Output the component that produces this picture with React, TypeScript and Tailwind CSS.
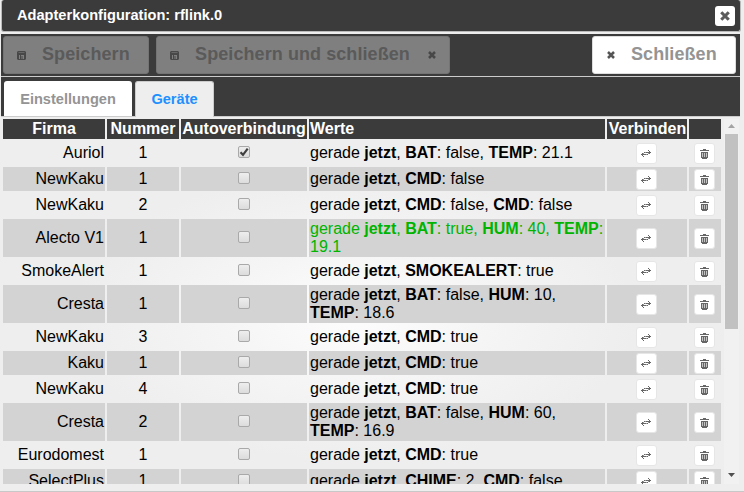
import React from 'react';

type Reading = [string, string];
type Device = { name: string; num: number; readings: Reading[]; auto?: boolean; fresh?: boolean; tall?: boolean };

const devices: Device[] = [
  { name: 'Auriol', num: 1, auto: true, readings: [['BAT', 'false'], ['TEMP', '21.1']] },
  { name: 'NewKaku', num: 1, readings: [['CMD', 'false']] },
  { name: 'NewKaku', num: 2, readings: [['CMD', 'false'], ['CMD', 'false']] },
  { name: 'Alecto V1', num: 1, fresh: true, tall: true, readings: [['BAT', 'true'], ['HUM', '40'], ['TEMP', '19.1']] },
  { name: 'SmokeAlert', num: 1, readings: [['SMOKEALERT', 'true']] },
  { name: 'Cresta', num: 1, tall: true, readings: [['BAT', 'false'], ['HUM', '10'], ['TEMP', '18.6']] },
  { name: 'NewKaku', num: 3, readings: [['CMD', 'true']] },
  { name: 'Kaku', num: 1, readings: [['CMD', 'true']] },
  { name: 'NewKaku', num: 4, readings: [['CMD', 'true']] },
  { name: 'Cresta', num: 2, tall: true, readings: [['BAT', 'false'], ['HUM', '60'], ['TEMP', '16.9']] },
  { name: 'Eurodomest', num: 1, readings: [['CMD', 'true']] },
  { name: 'SelectPlus', num: 1, readings: [['CHIME', '2'], ['CMD', 'false']] },
];

const columns = 'grid grid-cols-[102px_72px_126px_296px_80px_32px] gap-x-[2px]';

function CrossIcon({ className, size = 8 }: { className: string; size?: number }) {
  return (
    <svg width={size} height={size} viewBox="0 0 8 8" className={`block shrink-0 ${className}`}>
      <path d="M1 1 7 7M7 1 1 7" stroke="currentColor" strokeWidth="2.5" fill="none" />
    </svg>
  );
}

function DiskIcon() {
  return (
    <svg width="9" height="9" viewBox="0 0 9 9" className="block shrink-0 text-[#484848]">
      <path
        fillRule="evenodd"
        fill="currentColor"
        d="M1 0H8L9 1V8L8 9H1L0 8V1ZM2 4V8H3V4ZM4 5V8H7V4H4Z"
      />
      <path d="M1.5 1.5H7.5" stroke="#666" strokeWidth="1" />
      <path d="M5 5V8" stroke="currentColor" strokeWidth="1" />
    </svg>
  );
}

function SwapIcon() {
  return (
    <svg width="11" height="7" viewBox="0 0 11 7" shapeRendering="crispEdges" className="block shrink-0 text-[#666]">
      <path
        fill="currentColor"
        d="M7 0h1v1h-1zM8 1h1v1h-1zM3 2h1v1h-1zM5 2h5v1h-5zM8 3h1v1h-1zM1 3h1v1h-1zM0 4h5v1h-5zM6 4h1v1h-1zM1 5h1v1h-1zM2 6h1v1h-1z"
      />
      <path fill="#a0a0a0" d="M4 2h1v1h-1zM5 4h1v1h-1zM7 3h1v1h-1zM2 3h1v1h-1z" />
    </svg>
  );
}

function TrashIcon() {
  return (
    <svg width="9" height="10" viewBox="0 0 9 10" shapeRendering="crispEdges" className="mt-px block shrink-0 text-[#666]">
      <path fill="currentColor" d="M3 0H6V1H9V2H0V1H3ZM1 3H8V9H7V10H2V9H1Z" />
      <path fill="#c4c4c4" d="M2 4H3V8H2ZM4 4H5V8H4ZM6 4H7V8H6Z" />
    </svg>
  );
}

function IconButton({ children }: { children: React.ReactNode }) {
  return (
    <button className="mt-px flex size-[21px] items-center justify-center rounded-[3px] border border-[#e6e6e6] bg-white">
      {children}
    </button>
  );
}

function Checkbox({ checked }: { checked?: boolean }) {
  return (
    <span className="mb-[2px] flex size-[12px] items-center justify-center rounded-[2px] border border-[#a9a9a9] bg-gradient-to-b from-[#eee] to-[#dcdcdc]">
      {checked && (
        <svg width="10" height="10" viewBox="0 0 10 10" className="block shrink-0">
          <path d="M1.5 5.2 4 7.8 8.7 1.7" stroke="#404040" strokeWidth="2.2" fill="none" />
        </svg>
      )}
    </span>
  );
}

function Row({ device, striped }: { device: Device; striped: boolean }) {
  const cell = striped ? 'bg-[#d3d3d3]' : '';
  return (
    <div className={`${columns} shrink-0 leading-[18px] ${device.tall ? 'h-[38px]' : 'h-[24px]'}`}>
      <div className={`flex items-center justify-end pr-px ${cell}`}>{device.name}</div>
      <div className={`flex items-center justify-center ${cell}`}>{device.num}</div>
      <div className={`flex items-center justify-center ${cell}`}>
        <Checkbox checked={device.auto} />
      </div>
      <div className={`flex items-center pl-px ${cell} ${device.fresh ? 'text-[#00b400]' : ''}`}>
        <span>
          gerade <b>jetzt</b>
          {device.readings.map(([key, value], i) => (
            <React.Fragment key={i}>
              , <b>{key}</b>: {value}
            </React.Fragment>
          ))}
        </span>
      </div>
      <div className={`flex items-center justify-center pr-px ${cell}`}>
        <IconButton>
          <SwapIcon />
        </IconButton>
      </div>
      <div className={`flex items-center justify-center pr-px ${cell}`}>
        <IconButton>
          <TrashIcon />
        </IconButton>
      </div>
    </div>
  );
}

export default function App() {
  return (
    <div className="flex h-[492px] w-[744px] flex-col overflow-hidden border-b border-[#c8c8c8] bg-[#eee] pl-px font-['Liberation_Sans',Arial,sans-serif] text-[16px] text-black">
      <header className="flex h-[32px] w-[740px] shrink-0 items-center justify-between rounded-[3px] border border-t-0 border-[#bbb] bg-[#3b3b3b] pr-[5px] pl-[15px]">
        <h1 className="pt-px text-[14.6px] font-bold text-white">Adapterkonfiguration: rflink.0</h1>
        <button className="mt-px flex size-[20px] items-center justify-center rounded-[3px] bg-white">
          <CrossIcon size={10} className="text-[#5c5c5c]" />
        </button>
      </header>

      <div className="mt-[2px] flex h-[43px] w-[739px] shrink-0 border-b border-[#ccc] bg-[#3b3b3b] pt-[2px] pr-[4px] pl-[2px] text-[18px] font-bold">
        <button className="flex h-[38px] w-[146px] items-center rounded-[3px] border border-[#747474] bg-[#7f7f7f] pl-[13px] text-[#5a5a5a]">
          <DiskIcon />
          <span className="ml-[16px] pb-px tracking-[0.08px]">Speichern</span>
        </button>
        <button className="ml-[7px] flex h-[38px] w-[294px] items-center rounded-[3px] border border-[#747474] bg-[#7f7f7f] pl-[13px] text-[#5a5a5a]">
          <DiskIcon />
          <span className="ml-[15px] w-[217px] pb-px tracking-[0.08px] whitespace-nowrap">Speichern und schließen</span>
          <CrossIcon className="ml-[17px] text-[#484848]" />
        </button>
        <button className="ml-auto flex h-[38px] w-[144px] items-center rounded-[3px] border border-[#ddd] bg-white pl-[14px] text-[#949494]">
          <CrossIcon className="text-[#555]" />
          <span className="ml-[16px] pb-px tracking-[0.08px]">Schließen</span>
        </button>
      </div>

      <nav className="flex h-[40px] w-[739px] shrink-0 items-start border-b border-[#ccc] bg-[#3b3b3b] pt-[4px] pl-[3px] text-[14.6px] font-bold">
        <button className="flex h-[35px] w-[128px] items-center justify-center rounded-t-[3px] bg-white pt-[2px] text-[#949494]">
          Einstellungen
        </button>
        <button className="ml-[3px] flex h-[36px] w-[79px] items-center justify-center rounded-t-[3px] border border-b-0 border-[#ccc] bg-[#eee] text-[#1e90ff]">
          Geräte
        </button>
      </nav>

      <main className="mt-[2px] flex h-[365px] w-[738px] shrink-0 overflow-hidden bg-[radial-gradient(ellipse_at_48%_54%,#fdfdfd_0%,#f5f5f5_25%,#eee_52%)] pl-[2px]">
        <div className="flex w-[718px] flex-col gap-[2px]">
          <div className={`${columns} h-[20px] shrink-0 text-center leading-[19px] font-bold text-white`}>
            <div className="bg-[#3b3b3b]">Firma</div>
            <div className="bg-[#3b3b3b]">Nummer</div>
            <div className="bg-[#3b3b3b]">Autoverbindung</div>
            <div className="bg-[#3b3b3b] pl-px text-left">Werte</div>
            <div className="bg-[#3b3b3b] pl-px">Verbinden</div>
            <div className="bg-[#3b3b3b]" />
          </div>
          {devices.map((device, i) => (
            <Row key={i} device={device} striped={i % 2 === 1} />
          ))}
        </div>
        <div className="ml-[3px] flex w-[15px] flex-col items-center bg-[#f1f1f1] pt-[5px] pb-[7px]">
          <svg width="7" height="4" viewBox="0 0 7 4" className="block">
            <path d="M0 4 3.5 0 7 4Z" fill="#a3a3a3" />
          </svg>
          <div className="mt-[6px] h-[195px] w-[13px] bg-[#c1c1c1]" />
          <svg width="7" height="4" viewBox="0 0 7 4" className="mt-auto block">
            <path d="M0 0 3.5 4 7 0Z" fill="#505050" />
          </svg>
        </div>
      </main>
    </div>
  );
}
